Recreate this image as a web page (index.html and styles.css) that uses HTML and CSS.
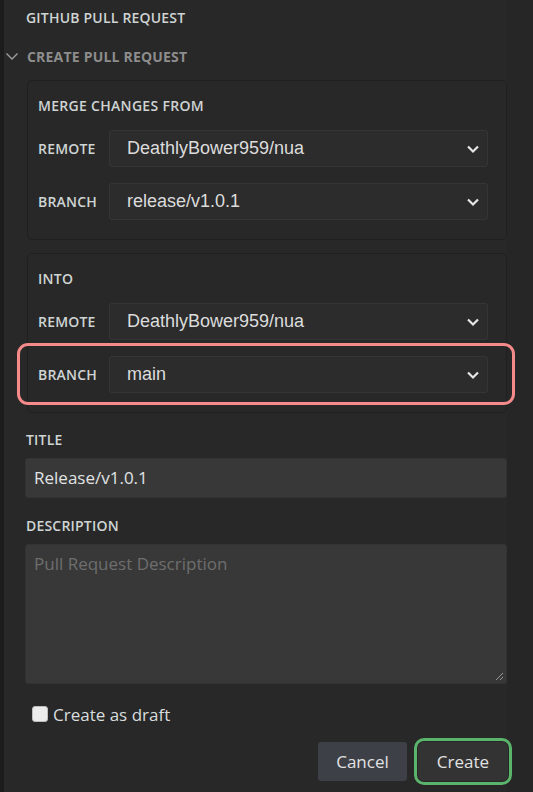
FILE: index.html
```html
<!DOCTYPE html>
<html>
<head>
<meta charset="utf-8">
<link rel="stylesheet" href="styles.css">
</head>
<body>
<div class="strip"></div>
<div class="panel">
  <div class="view-title">GITHUB PULL REQUEST</div>
  <div class="section-head">
    <svg class="twisty" width="14" height="14" viewBox="0 0 14 14"><path d="M1.5 4.5 L7 10 L12.5 4.5" fill="none" stroke="#a0a0a0" stroke-width="1.3"/></svg>
    <span>CREATE PULL REQUEST</span>
  </div>
  <div class="content">
    <div class="group">
      <div class="group-title">MERGE CHANGES FROM</div>
      <div class="row">
        <div class="label">REMOTE</div>
        <div class="select"><span>DeathlyBower959/nua</span><svg class="chev" width="14" height="10" viewBox="0 0 14 10"><path d="M2 2.5 L7 7.5 L12 2.5" fill="none" stroke="#e6e6e6" stroke-width="2.2"/></svg></div>
      </div>
      <div class="row">
        <div class="label">BRANCH</div>
        <div class="select"><span>release/v1.0.1</span><svg class="chev" width="14" height="10" viewBox="0 0 14 10"><path d="M2 2.5 L7 7.5 L12 2.5" fill="none" stroke="#e6e6e6" stroke-width="2.2"/></svg></div>
      </div>
    </div>
    <div class="group second">
      <div class="group-title">INTO</div>
      <div class="row">
        <div class="label">REMOTE</div>
        <div class="select"><span>DeathlyBower959/nua</span><svg class="chev" width="14" height="10" viewBox="0 0 14 10"><path d="M2 2.5 L7 7.5 L12 2.5" fill="none" stroke="#e6e6e6" stroke-width="2.2"/></svg></div>
      </div>
      <div class="row highlight">
        <div class="label">BRANCH</div>
        <div class="select"><span>main</span><svg class="chev" width="14" height="10" viewBox="0 0 14 10"><path d="M2 2.5 L7 7.5 L12 2.5" fill="none" stroke="#e6e6e6" stroke-width="2.2"/></svg></div>
      </div>
    </div>
    <div class="field-label title-label">TITLE</div>
    <div class="input">Release/v1.0.1</div>
    <div class="field-label desc-label">DESCRIPTION</div>
    <div class="textarea">
      <span class="placeholder">Pull Request Description</span>
      <svg class="grip" width="10" height="10" viewBox="0 0 10 10"><path d="M9 2 L2 9 M9 6 L6 9" stroke="#9a9a9a" stroke-width="1"/></svg>
    </div>
    <label class="draft"><span class="box"></span><span>Create as draft</span></label>
    <div class="actions">
      <button class="btn cancel">Cancel</button>
      <button class="btn create">Create</button>
    </div>
  </div>
</div>
<div class="rest"></div>
</body>
</html>
```
FILE: styles.css
```css
html, body {
  margin: 0;
  padding: 0;
  height: 792px;
  overflow: hidden;
}
body {
  display: flex;
  background: #262626;
  font-family: "Open Sans", "Noto Sans", sans-serif;
}
.strip {
  width: 4px;
  background: #1c1c1c;
  flex: none;
}
.panel {
  width: 503px;
  flex: none;
  background: #282828;
  display: flex;
  flex-direction: column;
  position: relative;
  z-index: 1;
}
.rest {
  flex: 1;
  background: #262626;
}
.view-title {
  height: 35px;
  line-height: 35px;
  padding-left: 22px;
  font-size: 14px;
  letter-spacing: 0.2px;
  font-weight: 600;
  color: #cfd4d4;
}
.section-head {
  height: 42px;
  display: flex;
  align-items: center;
  gap: 8px;
  padding-left: 1px;
  font-size: 14px;
  letter-spacing: 0.2px;
  font-weight: 700;
  color: #8d8d8d;
}
.content {
  padding: 3px 0 0 21px;
  display: flex;
  flex-direction: column;
}
.group {
  margin-left: 2px;
  border: 1px solid #202020;
  border-radius: 5px;
  background: #282828;
  padding: 0 18px 19px 10px;
  box-sizing: border-box;
  width: 480px;
}
.group.second {
  margin-top: 13px;
}
.group-title {
  height: 49px;
  line-height: 50px;
  font-size: 14px;
  letter-spacing: 0.3px;
  font-weight: 600;
  color: #cfd4d4;
}
.row {
  display: flex;
  align-items: center;
  height: 37px;
  position: relative;
}
.row + .row {
  margin-top: 16px;
}
.label {
  width: 71px;
  flex: none;
  font-size: 14px;
  letter-spacing: 0.2px;
  font-weight: 600;
  color: #cfd4d4;
}
.select {
  flex: 1;
  height: 37px;
  box-sizing: border-box;
  border: 1px solid #353535;
  border-radius: 3px;
  background: #2c2c2c;
  display: flex;
  align-items: center;
  justify-content: space-between;
  padding: 0 7px 0 17px;
  font-family: "Liberation Sans", Arial, sans-serif;
  font-size: 18px;
  color: #dcdcdc;
}
.chev { flex: none; }
.highlight::after {
  content: "";
  position: absolute;
  left: -21px;
  right: -27px;
  top: -13px;
  bottom: -12px;
  border: 3px solid #f48a8a;
  border-radius: 11px;
  pointer-events: none;
}
.field-label {
  font-size: 14px;
  letter-spacing: 0.2px;
  font-weight: 600;
  color: #cfd4d4;
  padding-left: 1px;
}
.title-label {
  margin-top: 17px;
  height: 28px;
  line-height: 20px;
}
.input {
  height: 40px;
  box-sizing: border-box;
  width: 482px;
  background: #383838;
  border: 1px solid #333333;
  border-radius: 3px;
  padding-left: 8px;
  line-height: 38px;
  font-size: 17px;
  color: #e0e4e4;
}
.desc-label {
  margin-top: 18px;
  height: 28px;
  line-height: 20px;
}
.textarea {
  position: relative;
  height: 140px;
  box-sizing: border-box;
  width: 482px;
  background: #383838;
  border: 1px solid #333333;
  border-radius: 3px;
  padding: 7px 8px;
  font-size: 17px;
}
.placeholder { color: #6e6e6e; }
.grip {
  position: absolute;
  right: 2px;
  bottom: 2px;
}
.draft {
  display: flex;
  align-items: center;
  gap: 5px;
  margin-top: 22px;
  padding-left: 7px;
  height: 16px;
  font-size: 17px;
  color: #d8dede;
}
.box {
  width: 16px;
  height: 16px;
  box-sizing: border-box;
  background: #ececec;
  border: 1px solid #bdbdbd;
  border-radius: 3px;
}
.actions {
  display: flex;
  justify-content: flex-end;
  gap: 11px;
  margin-top: 20px;
  margin-right: -1px;
}
.btn {
  height: 39px;
  border: none;
  border-radius: 3px;
  font-family: "Open Sans", "Noto Sans", sans-serif;
  font-size: 17px;
  color: #e2e2e2;
  padding: 0;
}
.cancel {
  width: 89px;
  background: #3d4046;
}
.create {
  width: 90px;
  background: #333333;
  outline: 3px solid #5bb46b;
  outline-offset: 1px;
  border-radius: 6px;
}
```
